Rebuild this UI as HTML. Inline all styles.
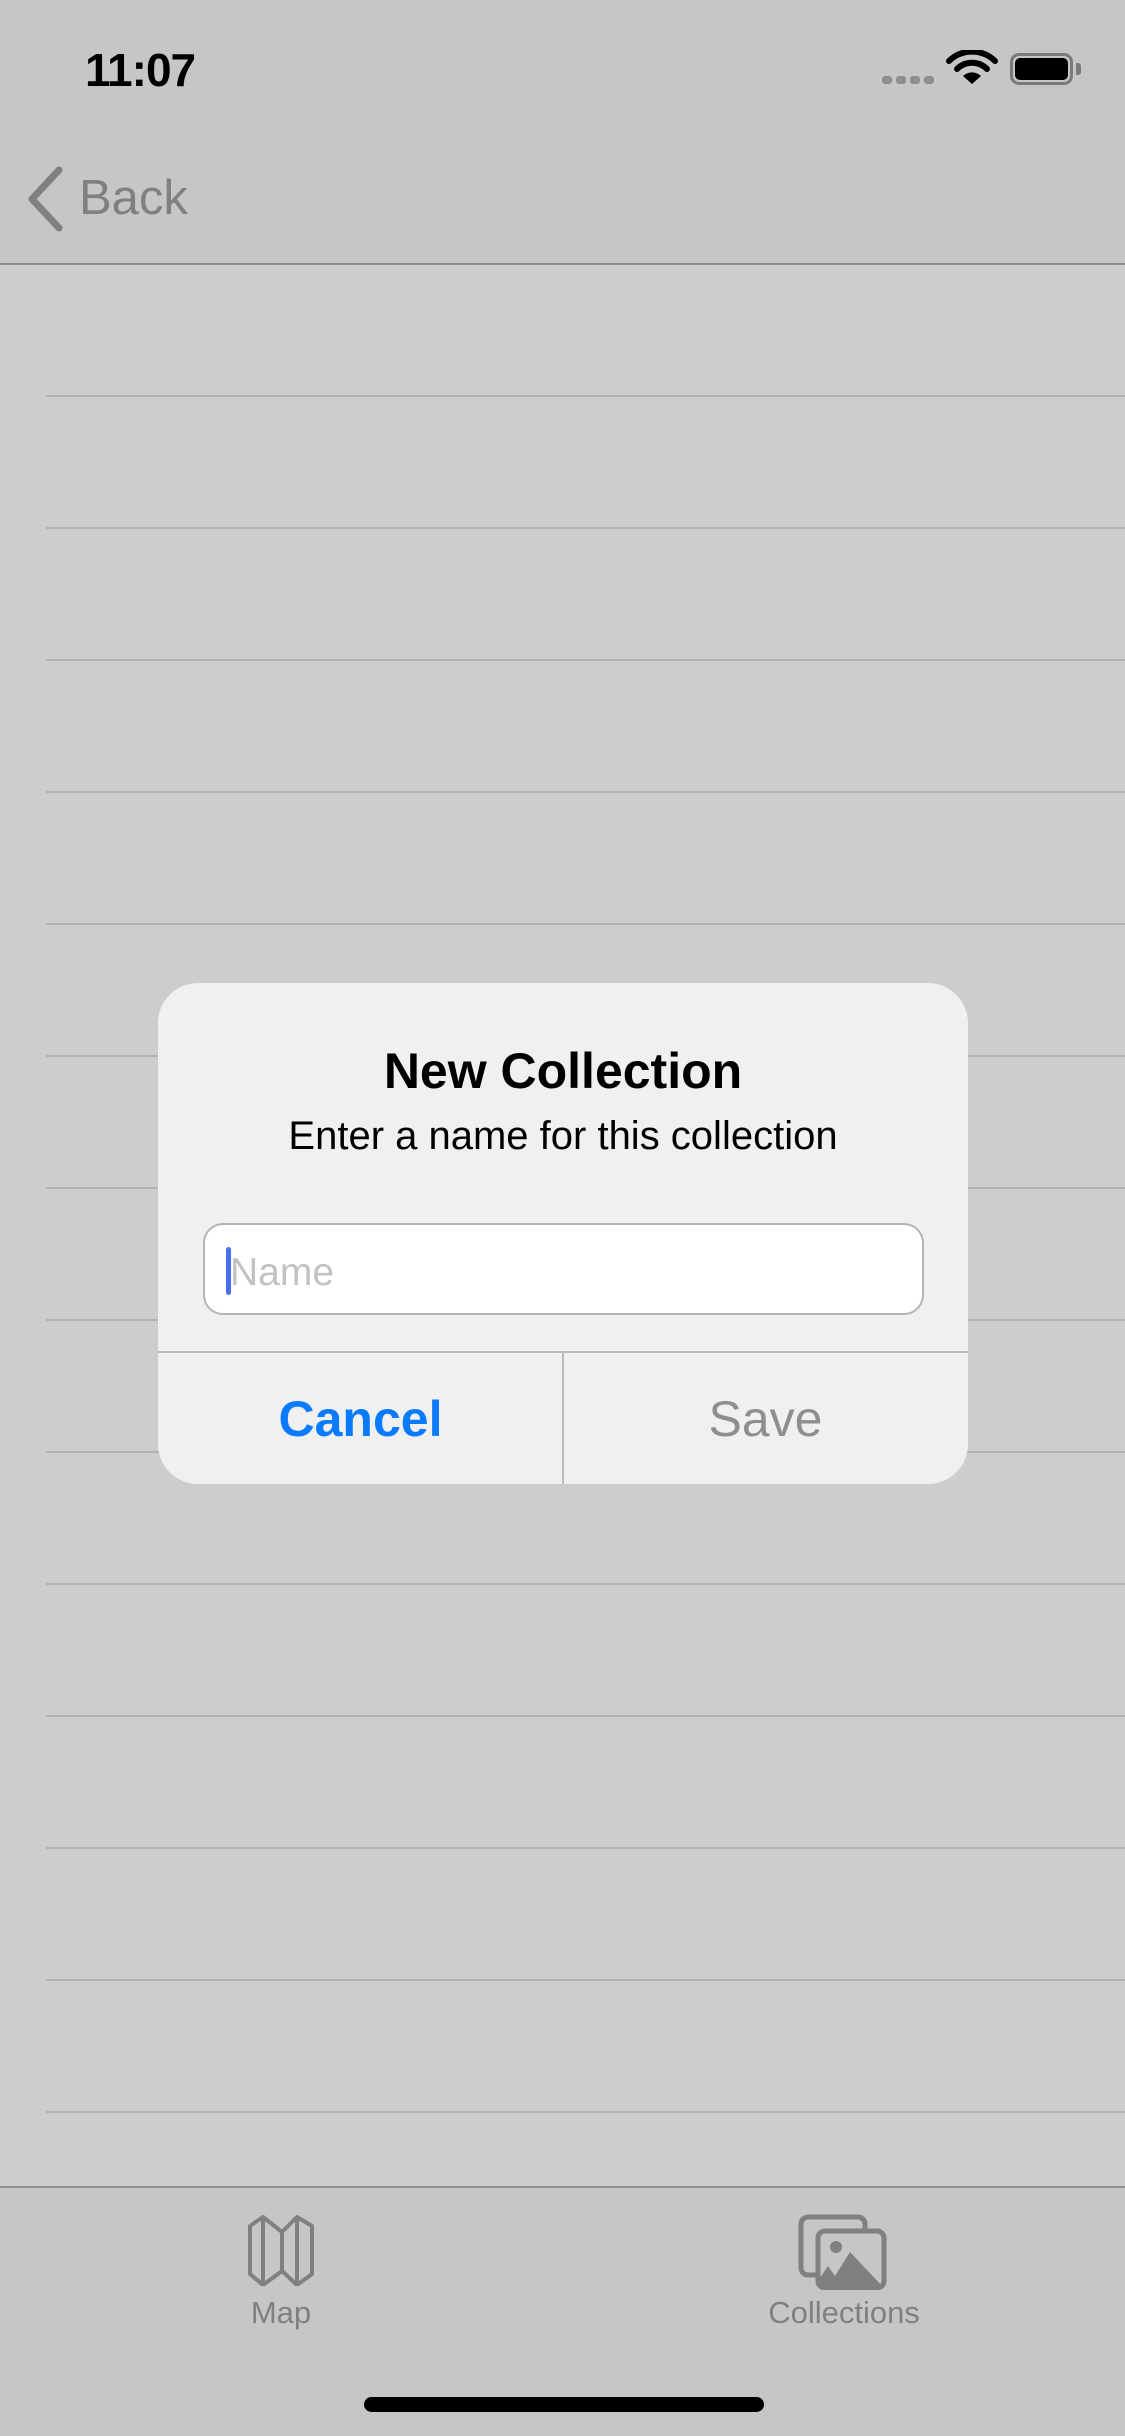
<!DOCTYPE html>
<html><head><meta charset="utf-8"><style>
*{margin:0;padding:0;box-sizing:border-box}
body{width:1125px;height:2436px;position:relative;overflow:hidden;background:#cdcdcd;font-family:"Liberation Sans",sans-serif}
.abs{position:absolute}
.sep{position:absolute;left:46px;right:0;height:2px;background:#b2b2b2}
</style></head><body>
<div class="abs" style="left:0;top:0;width:1125px;height:264px;background:#c6c6c6"></div>
<div class="abs" style="left:0;top:263px;width:1125px;height:2px;background:#8e8e8e"></div>
<div class="abs" style="left:85px;top:43px;font-size:46px;font-weight:bold;color:#000;letter-spacing:-1px">11:07</div>
<div class="abs" style="left:882px;top:76px;width:10px;height:8px;border-radius:3px;background:#8e8e8e"></div>
<div class="abs" style="left:896px;top:76px;width:10px;height:8px;border-radius:3px;background:#8e8e8e"></div>
<div class="abs" style="left:910px;top:76px;width:10px;height:8px;border-radius:3px;background:#8e8e8e"></div>
<div class="abs" style="left:924px;top:76px;width:10px;height:8px;border-radius:3px;background:#8e8e8e"></div>
<svg class="abs" style="left:946px;top:50px" width="52" height="36" viewBox="0 0 52 36">
<path d="M3 11 A33 33 0 0 1 49 11" stroke="#000" stroke-width="6" fill="none" stroke-linecap="round"/>
<path d="M11 19 A21 21 0 0 1 41 19" stroke="#000" stroke-width="6" fill="none" stroke-linecap="round"/>
<path d="M17 26 L26 34 L35 26 A13 13 0 0 0 17 26Z" fill="#000"/>
</svg>
<div class="abs" style="left:1010px;top:53px;width:63px;height:32px;border:3px solid #7a7a7a;border-radius:9px"></div>
<div class="abs" style="left:1015px;top:58px;width:53px;height:22px;border-radius:5px;background:#000"></div>
<div class="abs" style="left:1076px;top:63px;width:5px;height:12px;border-radius:0 3px 3px 0;background:#7a7a7a"></div>
<svg class="abs" style="left:24px;top:164px" width="44" height="70" viewBox="0 0 44 70"><path d="M35 6 L8 35 L35 64" stroke="#808080" stroke-width="7" fill="none" stroke-linecap="round" stroke-linejoin="round"/></svg>
<div class="abs" style="left:79px;top:170px;font-size:49px;color:#808080">Back</div>
<div class="sep" style="top:395px"></div>
<div class="sep" style="top:527px"></div>
<div class="sep" style="top:659px"></div>
<div class="sep" style="top:791px"></div>
<div class="sep" style="top:923px"></div>
<div class="sep" style="top:1055px"></div>
<div class="sep" style="top:1187px"></div>
<div class="sep" style="top:1319px"></div>
<div class="sep" style="top:1451px"></div>
<div class="sep" style="top:1583px"></div>
<div class="sep" style="top:1715px"></div>
<div class="sep" style="top:1847px"></div>
<div class="sep" style="top:1979px"></div>
<div class="sep" style="top:2111px"></div>
<div class="abs" style="left:0;top:2186px;width:1125px;height:250px;background:#c6c6c6;border-top:2px solid #8e8e8e"></div>
<svg class="abs" style="left:246px;top:2214px" width="72" height="72" viewBox="0 0 72 72">
<path d="M4 12 L17 3 L36 18 L51 3 L66 12 L66 60 L51 71 L36 57 L17 71 L4 60 Z M17 3 L17 71 M36 18 L36 57 M51 3 L51 71" stroke="#808080" stroke-width="4" fill="none" stroke-linejoin="round"/>
</svg>
<div class="abs" style="left:221px;top:2295px;width:120px;text-align:center;font-size:31px;color:#808080">Map</div>
<svg class="abs" style="left:798px;top:2214px" width="92" height="76" viewBox="0 0 92 76">
<rect x="3" y="3" width="64" height="58" rx="7" stroke="#808080" stroke-width="5" fill="none"/>
<rect x="20" y="17" width="66" height="57" rx="7" fill="#c6c6c6" stroke="#808080" stroke-width="5"/>
<circle cx="38" cy="33" r="6" fill="#808080"/>
<path d="M22 74 L22 64 L30 52 L37 62 L52 38 L86 74 Z" fill="#808080"/>
</svg>
<div class="abs" style="left:744px;top:2295px;width:200px;text-align:center;font-size:31px;color:#808080">Collections</div>
<div class="abs" style="left:364px;top:2397px;width:400px;height:15px;border-radius:8px;background:#000"></div>

<div class="abs" style="left:158px;top:983px;width:810px;height:501px;background:#f0f0f0;border-radius:40px;overflow:hidden">
  <div class="abs" style="left:0;top:59px;width:810px;text-align:center;font-size:50px;font-weight:bold;color:#000">New Collection</div>
  <div class="abs" style="left:0;top:131px;width:810px;text-align:center;font-size:40px;color:#000">Enter a name for this collection</div>
  <div class="abs" style="left:45px;top:240px;width:721px;height:92px;background:#fff;border:2px solid #b4b4b4;border-radius:20px">
    <div class="abs" style="left:21px;top:22px;width:5px;height:48px;border-radius:3px;background:#4a6ef0"></div>
    <div class="abs" style="left:25px;top:26px;font-size:39px;color:#c2c2c2">Name</div>
  </div>
  <div class="abs" style="left:0;top:368px;width:810px;height:2px;background:#bcbcbc"></div>
  <div class="abs" style="left:404px;top:369px;width:2px;height:132px;background:#bcbcbc"></div>
  <div class="abs" style="left:0;top:407px;width:405px;text-align:center;font-size:50px;font-weight:bold;color:#0a7aff">Cancel</div>
  <div class="abs" style="left:405px;top:407px;width:405px;text-align:center;font-size:50px;color:#8e8e8e">Save</div>
</div>
</body></html>
